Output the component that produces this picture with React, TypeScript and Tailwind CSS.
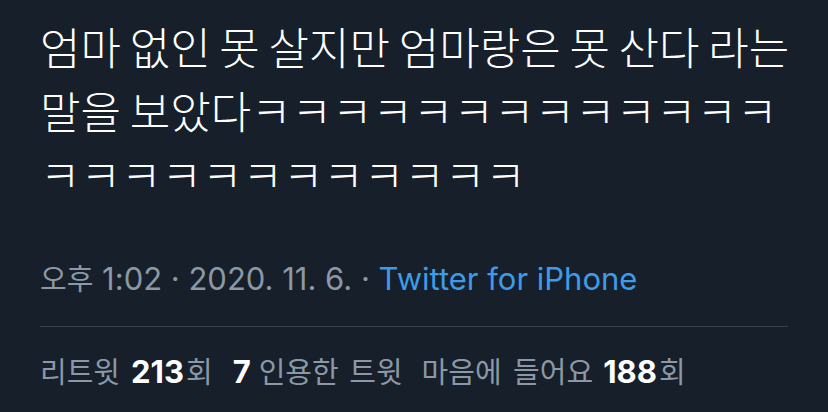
export default function App() {
  const ko = "font-['Noto_Sans_CJK_KR',sans-serif]";
  return (
    <div className="w-[828px] h-[412px] bg-[#161f2a] overflow-hidden">
      <div className="pl-[40px] pr-[40px] pt-[14px]">
        <div className={`${ko} font-light text-[44px] leading-[64px] text-white [word-spacing:-1px] whitespace-nowrap`}>
          <div>엄마 없인 못 살지만 엄마랑은 못 산다 라는</div>
          <div>말을 보았다ㅋㅋㅋㅋㅋㅋㅋㅋㅋㅋㅋㅋㅋ</div>
          <div>ㅋㅋㅋㅋㅋㅋㅋㅋㅋㅋㅋㅋ</div>
        </div>
        <div className="mt-[51px] pb-[27px] border-b border-[#38444d] font-['Inter',sans-serif] text-[31px] leading-[40px] text-[#8b98a5] whitespace-nowrap">
          <span className={`${ko} text-[29px]`}>오후</span> 1:02 · 2020. 11. 6. · <span className="text-[#3d9be8]">Twitter for iPhone</span>
        </div>
        <div className="pt-[23px] pb-[22px] border-b border-[#38444d] font-['Inter',sans-serif] text-[31px] leading-[40px] text-[#8b98a5] whitespace-nowrap flex items-baseline">
          <span className={`${ko} text-[29px]`}>리트윗</span>
          <span className="ml-[11px] font-bold text-white text-[31px]">213</span>
          <span className={`${ko} text-[29px] ml-[2px]`}>회</span>
          <span className="ml-[20px] font-bold text-white text-[31px]">7</span>
          <span className={`${ko} text-[29px] ml-[8px] [word-spacing:4px]`}>인용한 트윗</span>
          <span className={`${ko} text-[29px] ml-[19px] [word-spacing:5px]`}>마음에 들어요</span>
          <span className="ml-[10px] font-bold text-white text-[31px]">188</span>
          <span className={`${ko} text-[29px] ml-[2px]`}>회</span>
        </div>
      </div>
    </div>
  );
}
